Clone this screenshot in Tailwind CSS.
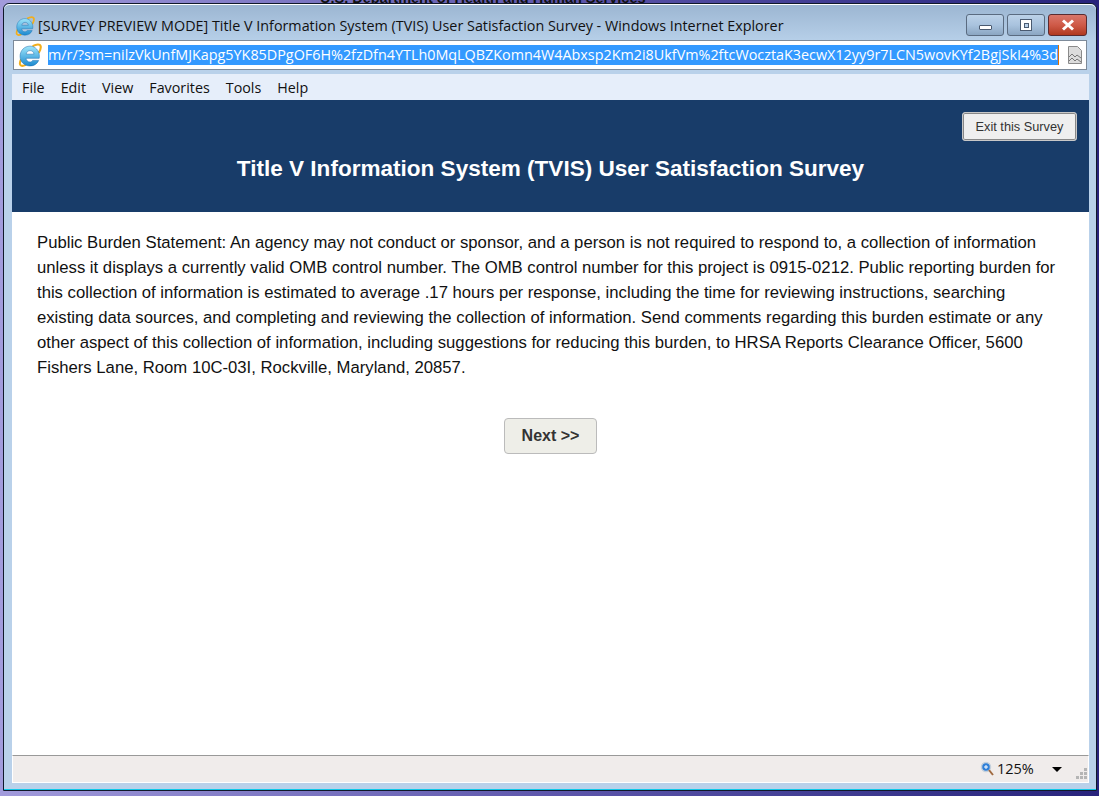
<!DOCTYPE html>
<html lang="en">
<head>
  <meta charset="UTF-8">
  <meta name="viewport" content="width=device-width, initial-scale=1.0">
  <title>Survey Preview</title>
  <script src="https://cdn.jsdelivr.net/npm/@tailwindcss/browser@4"></script>
</head>
<body class="h-[796px] w-[1099px] overflow-hidden bg-gradient-to-r from-[#a29bdc] via-[#5e57ac] to-[#28237c] font-['Liberation_Sans',sans-serif]">
  <svg width="0" height="0" class="absolute">
    <defs>
      <linearGradient id="ieblue" x1="0" y1="0" x2="0" y2="1">
        <stop offset="0" stop-color="#9fe6fa"/>
        <stop offset="1" stop-color="#1c8ad0"/>
      </linearGradient>
      <symbol id="ie" viewBox="1 0 23 23">
        <path d="M4 15.500C1.500 20.500 3 23.500 8.500 21M15 3c3.500-2 7.500-2.500 7.800.5.200 1.700-.8 4-2 6" fill="none" stroke="#f2ae1c" stroke-width="2"/>
        <path d="M12.500 3C7 3 3 7.300 3 12.700S7 22 12.500 22c4 0 7-2 8.300-5.300h-5.800c-.7 1-1.500 1.500-2.600 1.500-2.200 0-3.500-1.500-3.700-3.500H21.300c.1-.7.200-1.400.2-2C21.500 7.200 17.500 3 12.500 3zM8.800 10.700c.3-2 1.800-3.400 3.800-3.400 2.100 0 3.500 1.400 3.700 3.400z" fill="url(#ieblue)" stroke="#1a6fb0" stroke-width=".5"/>
      </symbol>
    </defs>
  </svg>

  <div class="flex h-[3px] items-end overflow-hidden pl-[320px]">
    <span class="mb-[-3px] whitespace-nowrap text-[14.500px] leading-[16px] font-bold text-[#111]">U.S. Department of Health and Human Services</span>
  </div>
  <div class="ml-[3px] flex h-[788px] w-[1094px] flex-col rounded-t-md border border-[#10182a] bg-[#b9d1ea] shadow-[inset_0_-1px_0_#10c8e8]">

    <!-- title bar -->
    <div class="flex h-[36px] shrink-0 items-center rounded-t-md border-t border-white bg-gradient-to-b from-[#9cb6d2] to-[#b6cfe8] pt-[6px] pr-[9px] pl-[11px]">
      <svg width="20" height="20" class="shrink-0"><use href="#ie"/></svg>
      <span class="ml-[3px] font-['Open_Sans',sans-serif] text-[14.350px] whitespace-nowrap text-[#111]">[SURVEY PREVIEW MODE] Title V Information System (TVIS) User Satisfaction Survey - Windows Internet Explorer</span>
      <div class="mb-[1px] ml-auto flex gap-[3px]">
        <div class="flex h-[22px] w-[38px] items-center justify-center rounded-[3px] border border-[#5a6b80] bg-gradient-to-b from-[#bcd2e8] via-[#a9c3de] to-[#8ba6c2]">
          <div class="mt-[5px] h-[5px] w-[13px] rounded-[1px] border border-[#4a5a70] bg-white"></div>
        </div>
        <div class="flex h-[22px] w-[38px] items-center justify-center rounded-[3px] border border-[#5a6b80] bg-gradient-to-b from-[#bcd2e8] via-[#a9c3de] to-[#8ba6c2]">
          <div class="flex h-[12px] w-[12px] items-center justify-center border border-[#4a5a70] bg-white"><div class="h-[5px] w-[5px] border border-[#4a5a70] bg-[#b9d1ea]"></div></div>
        </div>
        <div class="flex h-[22px] w-[39px] items-center justify-center rounded-[3px] border border-[#5a2b30] bg-gradient-to-b from-[#d9766a] via-[#cf5a48] to-[#b0391f]">
          <svg width="14" height="12" viewBox="0 0 14 12"><path d="M2 1.500l10 9M12 1.500l-10 9" stroke="#fff" stroke-width="3"/></svg>
        </div>
      </div>
    </div>

    <!-- address bar -->
    <div class="mr-[9px] ml-[9px] flex h-[30px] shrink-0 items-center border border-[#7d8a99] bg-white">
      <svg width="24" height="24" class="ml-[4px] shrink-0"><use href="#ie"/></svg>
      <div class="ml-[6px] flex h-[20px] w-[1011px] items-center overflow-hidden border-r border-r-[#e07000] bg-[#3399ff] font-['Open_Sans',sans-serif] text-[14.370px] whitespace-nowrap text-white">m/r/?sm=nilzVkUnfMJKapg5YK85DPgOF6H%2fzDfn4YTLh0MqLQBZKomn4W4Abxsp2Km2i8UkfVm%2ftcWocztaK3ecwX12yy9r7LCN5wovKYf2BgjSkI4%3d</div>
      <svg width="14" height="18" viewBox="0 0 14 18" class="ml-[9px] shrink-0"><path d="M.5.500h9l4 4v13H.5z" fill="#dcdcdc" stroke="#8a8a8a"/><path d="M1 11l3-3 3 3 2-2 4 3M1 15l3-3 3 3 2-2 4 3" fill="none" stroke="#777"/></svg>
    </div>

    <!-- page -->
    <div class="mt-[4px] mr-[7px] mb-[7px] ml-[8px] flex flex-1 flex-col">
      <div class="flex h-[26px] shrink-0 items-center gap-[16px] bg-[#e6eefa] pt-[1px] pl-[10px] font-['Open_Sans',sans-serif] text-[14.300px] text-[#111]">
        <span>File</span><span>Edit</span><span>View</span><span>Favorites</span><span>Tools</span><span>Help</span>
      </div>

      <div class="h-[112px] shrink-0 bg-[#183c69] px-[12px] pt-[12px]">
        <div class="flex justify-end">
          <button class="h-[29px] w-[115px] rounded-[3px] border border-[#c8c8c8] bg-[#efefef] text-[12.750px] text-[#333] shadow-[inset_0_0_0_1px_#888]">Exit this Survey</button>
        </div>
        <h1 class="mt-[13px] text-center text-[22.550px] leading-[30px] font-bold text-white">Title V Information System (TVIS) User Satisfaction Survey</h1>
      </div>

      <div class="flex-1 bg-white px-[25px] pt-[18px]">
        <p class="text-[16.700px] leading-[25px] text-[#111]">Public Burden Statement: An agency may not conduct or sponsor, and a person is not required to respond to, a collection of information unless it displays a currently valid OMB control number. The OMB control number for this project is 0915-0212. Public reporting burden for this collection of information is estimated to average .17 hours per response, including the time for reviewing instructions, searching existing data sources, and completing and reviewing the collection of information. Send comments regarding this burden estimate or any other aspect of this collection of information, including suggestions for reducing this burden, to HRSA Reports Clearance Officer, 5600 Fishers Lane, Room 10C-03I, Rockville, Maryland, 20857.</p>
        <div class="mt-[38px] flex justify-center">
          <button class="h-[36px] w-[93px] rounded-[4px] border border-[#bbb] bg-[#eeeee8] text-[16px] font-bold text-[#333]">Next &gt;&gt;</button>
        </div>
      </div>

      <div class="flex h-[28px] shrink-0 items-center border border-t-[#999] border-r-white border-b-white border-l-white bg-[#f0eceb] font-['Open_Sans',sans-serif] text-[14.500px] text-[#111]">
        <svg width="14" height="16" viewBox="0 0 14 16" class="ml-[967px] shrink-0"><circle cx="6" cy="6" r="4.500" fill="#2f7fd8" stroke="#c4d0dc" stroke-width="1.500"/><path d="M4 6h4M6 4v4" stroke="#fff"/><path d="M9 9l4 5" stroke="#a06a40" stroke-width="2"/></svg>
        <span class="ml-[3px]">125%</span>
        <div class="ml-[18px] h-0 w-0 border-x-[5px] border-t-[5px] border-x-transparent border-t-black"></div>
        <svg width="12" height="12" viewBox="0 0 12 12" class="mt-[10px] ml-[14px] shrink-0" fill="#b5b5b5"><rect x="8" y="0" width="3" height="3"/><rect x="4" y="4" width="3" height="3"/><rect x="8" y="4" width="3" height="3"/><rect x="0" y="8" width="3" height="3"/><rect x="4" y="8" width="3" height="3"/><rect x="8" y="8" width="3" height="3"/></svg>
      </div>
    </div>
  </div>
</body>
</html>
